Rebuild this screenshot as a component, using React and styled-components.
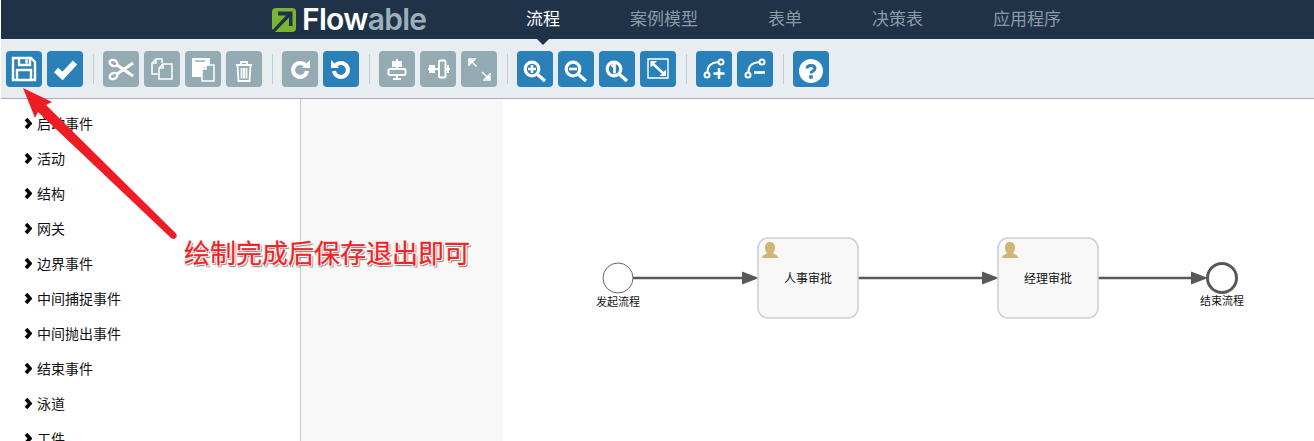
import React from 'react';
import styled, { createGlobalStyle } from 'styled-components';

const GlobalStyle = createGlobalStyle`
  html, body {
    margin: 0;
    padding: 0;
    background: #fff;
    overflow: hidden;
  }
  body {
    font-family: "Liberation Sans", "Noto Sans CJK SC", sans-serif;
  }
`;

const Page = styled.div`
  position: relative;
  display: flex;
  flex-direction: column;
  width: 1314px;
  height: 441px;
  padding-left: 1px;
  box-sizing: border-box;
  overflow: hidden;
`;

const Header = styled.header`
  display: flex;
  align-items: center;
  height: 39px;
  flex: none;
  background: #1f3247;
`;

const Logo = styled.div`
  display: flex;
  align-items: center;
  gap: 6px;
  margin-left: 271px;
  width: 185px;
`;

const LogoText = styled.span`
  font-family: Inter, sans-serif;
  font-size: 30px;
  line-height: 39px;
  font-weight: 600;
  letter-spacing: -0.7px;
  color: #fff;

  em {
    font-style: normal;
    color: #9db0ba;
  }
`;

const Nav = styled.nav`
  display: flex;
  margin-left: 34px;
`;

const NavItem = styled.a`
  position: relative;
  padding: 0 35px;
  font-size: 17px;
  line-height: 39px;
  color: ${(p) => (p.$active ? '#fff' : '#8b9ba6')};

  ${(p) =>
    p.$active &&
    `&::after {
      content: '';
      position: absolute;
      left: 50%;
      top: 39px;
      margin-left: -6px;
      border: 6px solid transparent;
      border-bottom: 0;
      border-top-color: #1f3247;
      z-index: 2;
    }`}
`;

const Toolbar = styled.div`
  display: flex;
  align-items: center;
  flex: none;
  height: 59px;
  padding: 0 0 0 5px;
  background: #e8edf1;
  border-bottom: 1px solid #a4afbd;
  box-sizing: content-box;
`;

const ToolGroup = styled.div`
  display: flex;
  gap: 5px;
`;

const Separator = styled.span`
  width: 1px;
  height: 30px;
  margin: 0 9px 0 10px;
  background: #c3ccd2;
`;

const ToolButton = styled.button`
  display: flex;
  align-items: center;
  justify-content: center;
  width: 36px;
  height: 36px;
  padding: 0;
  border: 0;
  border-radius: 4px;
  background: ${(p) => (p.$muted ? '#94abb3' : '#2a80b9')};

  svg {
    display: block;
    width: 36px;
    height: 36px;
    fill: none;
    stroke: #fff;
  }
`;

const Main = styled.div`
  display: flex;
  flex: 1;
  min-height: 0;
`;

const Sidebar = styled.aside`
  flex: none;
  width: 299px;
  padding-top: 6px;
  background: #fff;
  border-right: 1px solid #c9c9c9;
`;

const PaletteRow = styled.div`
  display: flex;
  align-items: center;
  gap: 5px;
  height: 35px;
  padding-left: 23px;
  font-size: 14px;
  color: #111;

  svg {
    flex: none;
    width: 8px;
    height: 11px;
    margin-top: 1px;
  }
`;

const Gutter = styled.div`
  flex: none;
  width: 202px;
  background: #f8f8f8;
`;

const Canvas = styled.div`
  flex: 1;
  background: #fff;

  svg {
    display: block;
    width: 811px;
    height: 342px;
  }

  text {
    font-family: "Liberation Sans", "Noto Sans CJK SC", sans-serif;
    fill: #111;
    text-anchor: middle;
  }
`;

const ArrowOverlay = styled.svg`
  position: absolute;
  left: 0;
  top: 0;
  width: 200px;
  height: 250px;
  z-index: 3;
  pointer-events: none;
`;

const Callout = styled.div`
  position: absolute;
  left: 184px;
  top: 238px;
  font-size: 26px;
  line-height: 32px;
  white-space: nowrap;
  color: #ee2427;
  -webkit-text-stroke: 0.3px #ee2427;
  text-shadow: 1px 1px 0 #fff, -1px -1px 0 #fff, 1px -1px 0 #fff, -1px 1px 0 #fff,
    2px 2px 1px #8a8a8a, 0 2px 1px #aaa;
  z-index: 3;
`;

const icons = {
  save: (
    <g strokeWidth="2.4">
      <path d="M7 7H25L29 11V29H7Z" />
      <path d="M13 7V14H24V7" />
      <path d="M20.5 8.5V12.5" strokeWidth="2.5" />
      <path d="M11 29V19H25V29" />
    </g>
  ),
  check: <path d="M9 19L15.5 25L28 11.5" strokeWidth="6" />,
  cut: (
    <g strokeWidth="2.4">
      <ellipse cx="10.5" cy="12" rx="4" ry="2.8" transform="rotate(25 10.5 12)" />
      <ellipse cx="10.5" cy="25" rx="4" ry="2.8" transform="rotate(-25 10.5 25)" />
      <path d="M14 14L30 25M14 23L30 12" strokeWidth="3" />
    </g>
  ),
  copy: (
    <g strokeWidth="1.5">
      <path d="M8 19V12L12 8H18V12M8 19V23H14" />
      <path d="M12 8V12H8" />
      <path d="M15 28V17L19 13H28V28Z" fill="#94abb3" />
      <path d="M19 13V17H15" />
    </g>
  ),
  paste: (
    <g>
      <rect x="7" y="7" width="18" height="19" fill="#fff" stroke="none" />
      <path d="M10 10H20" stroke="#94abb3" strokeWidth="1.5" />
      <path d="M17 30V18L21 14H29V30Z" fill="#94abb3" strokeWidth="1.5" />
      <path d="M21 14V18H17" strokeWidth="1.5" />
    </g>
  ),
  trash: (
    <g strokeWidth="1.8">
      <path d="M10 14H26M15 14V11H21V14" />
      <path d="M11.5 14L12.5 30H23.5L24.5 14" />
      <path d="M15.5 17V27.5M18 17V27.5M20.5 17V27.5" />
    </g>
  ),
  redo: (
    <g>
      <path d="M23.5 14.5A7 7 0 1 0 25 20" strokeWidth="4" />
      <path d="M20 17H28V9Z" fill="#fff" stroke="none" />
    </g>
  ),
  undo: (
    <g>
      <path d="M12.5 14.5A7 7 0 1 1 11 20" strokeWidth="4" />
      <path d="M16 17H8V9Z" fill="#fff" stroke="none" />
    </g>
  ),
  alignH: (
    <g>
      <path d="M18 8V29M14 28H22" strokeWidth="2" />
      <rect x="13" y="10" width="10" height="6" fill="#fff" stroke="none" />
      <rect x="9.5" y="18" width="17" height="6" rx="1.5" fill="#94abb3" strokeWidth="2" />
    </g>
  ),
  alignV: (
    <g>
      <path d="M8 18H30M28 14V22" strokeWidth="2" />
      <rect x="9" y="14" width="6" height="8" fill="#fff" stroke="none" />
      <rect x="19" y="9.5" width="6.5" height="17" rx="1.5" fill="#94abb3" strokeWidth="2" />
    </g>
  ),
  sameSize: (
    <g strokeWidth="1.6">
      <path d="M15 8H8V15" />
      <path d="M9 9H14L9 14Z" fill="#fff" stroke="none" />
      <path d="M11 11L15.5 15.5" />
      <path d="M22 29H29V22" />
      <path d="M28 28H23L28 23Z" fill="#fff" stroke="none" />
      <path d="M21 21L25.5 25.5" />
    </g>
  ),
  zoomIn: (
    <g>
      <circle cx="15" cy="18" r="6.8" strokeWidth="3.2" />
      <path d="M20 23L28 30" strokeWidth="3.2" />
      <path d="M11 18H19M15 14V22" strokeWidth="2.6" />
    </g>
  ),
  zoomOut: (
    <g>
      <circle cx="15" cy="18" r="6.8" strokeWidth="3.2" />
      <path d="M20 23L28 30" strokeWidth="3.2" />
      <path d="M11 18H19" strokeWidth="2.6" />
    </g>
  ),
  zoomActual: (
    <g>
      <circle cx="15" cy="18" r="6.8" strokeWidth="3.2" />
      <path d="M20 23L28 30" strokeWidth="3.2" />
      <path d="M12.5 15.5L15.5 13.5V22.5" strokeWidth="2.6" />
    </g>
  ),
  zoomFit: (
    <g>
      <path d="M8 8H28V27H8Z" strokeWidth="1.4" />
      <path d="M12 12L24 23" strokeWidth="2.4" />
      <path d="M10.5 10H17L10.5 16.5Z" fill="#fff" stroke="none" />
      <path d="M26 25H19.5L26 18.5Z" fill="#fff" stroke="none" />
    </g>
  ),
  addPoint: (
    <g strokeWidth="2">
      <circle cx="11" cy="24" r="2.5" />
      <circle cx="25" cy="11" r="2.5" />
      <path d="M11.5 21.5C11.5 15 14 12 22.5 11" />
      <path d="M17.5 22.5H28.5M23 17V28" strokeWidth="2.6" />
    </g>
  ),
  removePoint: (
    <g strokeWidth="2">
      <circle cx="11" cy="24" r="2.5" />
      <circle cx="25" cy="11" r="2.5" />
      <path d="M11.5 21.5C11.5 15 14 12 22.5 11" />
      <path d="M17 21.5H28" strokeWidth="2.6" />
    </g>
  ),
  help: (
    <g>
      <circle cx="18" cy="20" r="12" fill="#fff" stroke="none" />
      <path d="M14 17.5C14 13.5 22 13.5 22 17.5C22 20 18 20 18 22.5" stroke="#2a80b9" strokeWidth="3" />
      <rect x="16.2" y="24.2" width="3.6" height="3.4" fill="#2a80b9" stroke="none" />
    </g>
  ),
};

const toolGroups = [
  [['save'], ['check']],
  [['cut', true], ['copy', true], ['paste', true], ['trash', true]],
  [['redo', true], ['undo']],
  [['alignH', true], ['alignV', true], ['sameSize', true]],
  [['zoomIn'], ['zoomOut'], ['zoomActual'], ['zoomFit']],
  [['addPoint'], ['removePoint']],
  [['help']],
];

const navItems = ['流程', '案例模型', '表单', '决策表', '应用程序'];

const paletteItems = [
  '启动事件',
  '活动',
  '结构',
  '网关',
  '边界事件',
  '中间捕捉事件',
  '中间抛出事件',
  '结束事件',
  '泳道',
  '工件',
];

const Chevron = () => (
  <svg viewBox="0 0 8 11">
    <path d="M2 1L6 5.5L2 10" fill="none" stroke="#000" strokeWidth="3.6" />
  </svg>
);

const FlowableMark = () => (
  <svg width="24" height="24" viewBox="0 0 24 24">
    <path d="M4 0H20A4 4 0 0 1 24 4V20A4 4 0 0 1 20 24H3L0 21V4A4 4 0 0 1 4 0Z" fill="#79b530" />
    <path d="M6 3.5H20.5V18H17V9.5L3 24H0V22.5L14 7.5H6Z" fill="#1f3247" />
  </svg>
);

const Connector = ({ from, to }) => (
  <>
    <path d={`M${from} 278H${to - 16}`} stroke="#585858" strokeWidth="2.4" />
    <path d={`M${to - 16} 271.5L${to + 1} 278L${to - 16} 284.5Z`} fill="#585858" />
  </>
);

const UserTask = ({ x, label }) => (
  <g>
    <rect x={x} y="238" width="100" height="80" rx="10" fill="#f8f8f8" stroke="#cfcfcf" strokeWidth="1.5" />
    <path
      d={`M${x + 12} 242C${x + 8} 242 ${x + 7} 245 ${x + 7} 248C${x + 7} 250 ${x + 8} 252 ${x + 9} 253C${x + 7} 255 ${x + 4} 255 ${x + 4} 258H${x + 20}C${x + 20} 255 ${x + 17} 255 ${x + 15} 253C${x + 16} 252 ${x + 17} 250 ${x + 17} 248C${x + 17} 245 ${x + 16} 242 ${x + 12} 242Z`}
      fill="#d1b574"
    />
    <text x={x + 50} y="283" fontSize="12">
      {label}
    </text>
  </g>
);

const App = () => (
  <Page>
    <GlobalStyle />
    <Header>
      <Logo>
        <FlowableMark />
        <LogoText>
          Flow<em>able</em>
        </LogoText>
      </Logo>
      <Nav>
        {navItems.map((item, i) => (
          <NavItem key={item} $active={i === 0}>
            {item}
          </NavItem>
        ))}
      </Nav>
    </Header>

    <Toolbar>
      {toolGroups.map((group, i) => (
        <React.Fragment key={i}>
          {i > 0 && <Separator />}
          <ToolGroup>
            {group.map(([name, muted]) => (
              <ToolButton key={name} $muted={muted}>
                <svg viewBox="0 0 36 36">{icons[name]}</svg>
              </ToolButton>
            ))}
          </ToolGroup>
        </React.Fragment>
      ))}
    </Toolbar>

    <Main>
      <Sidebar>
        {paletteItems.map((item) => (
          <PaletteRow key={item}>
            <Chevron />
            {item}
          </PaletteRow>
        ))}
      </Sidebar>
      <Gutter />
      <Canvas>
        <svg viewBox="503 99 811 342">
          <Connector from={633} to={758} />
          <Connector from={858} to={998} />
          <Connector from={1098} to={1207} />
          <circle cx="618" cy="278" r="15" fill="#fff" stroke="#666" strokeWidth="1" />
          <text x="618" y="306" fontSize="11">
            发起流程
          </text>
          <UserTask x={758} label="人事审批" />
          <UserTask x={998} label="经理审批" />
          <circle cx="1222" cy="278" r="14.5" fill="#fff" stroke="#585858" strokeWidth="3" />
          <text x="1222" y="305" fontSize="11">
            结束流程
          </text>
        </svg>
      </Canvas>
    </Main>

    <ArrowOverlay viewBox="0 0 200 250">
      <path
        d="M23 88L52 102L46 105L175.5 233A3.2 3.2 0 0 1 171 238L38 112L35 118Z"
        fill="#ee1c25"
      />
    </ArrowOverlay>
    <Callout>绘制完成后保存退出即可</Callout>
  </Page>
);

export default App;
